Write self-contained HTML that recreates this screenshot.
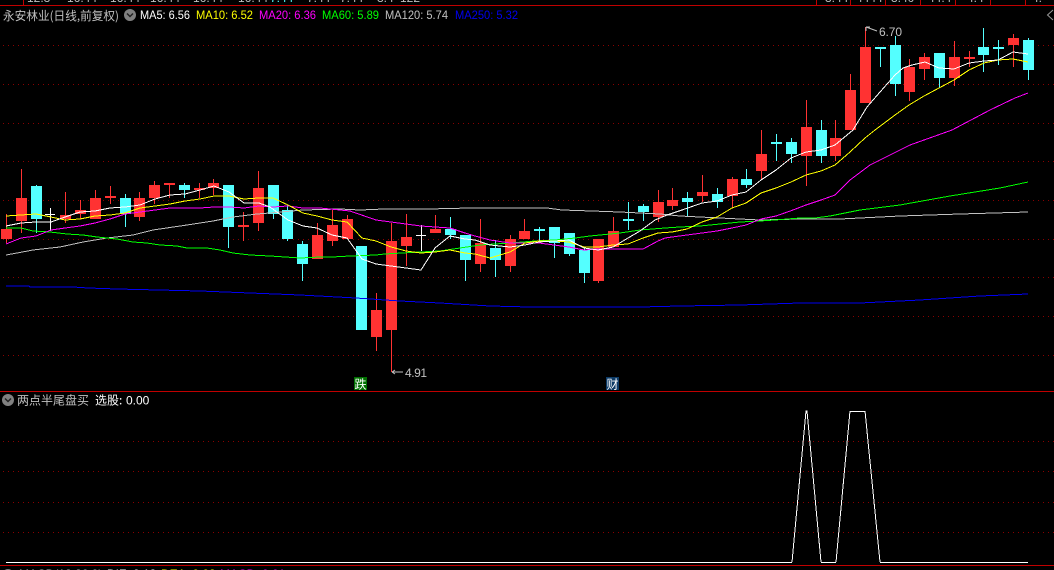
<!DOCTYPE html>
<html lang="zh">
<head>
<meta charset="utf-8">
<title>永安林业</title>
<style>
html,body{margin:0;padding:0;background:#000;width:1054px;height:570px;overflow:hidden}
svg{display:block}
text{font-family:"Liberation Sans","WenQuanYi Zen Hei","Noto Sans CJK SC",sans-serif;font-size:12px}
.cn{font-family:"WenQuanYi Zen Hei","Noto Sans CJK SC","Liberation Sans",sans-serif;font-size:12px}
.ma{shape-rendering:crispEdges;fill:none;stroke-width:1}
</style>
</head>
<body>
<svg width="1054" height="570" viewBox="0 0 1054 570" xmlns="http://www.w3.org/2000/svg">
<rect width="1054" height="570" fill="#000"/>

<!-- top strip -->
<g fill="#c0c0c0">
<text x="27" y="2">12.3</text><text x="67" y="2">16.44</text><text x="110" y="2">16.44</text><text x="150" y="2">16.44</text><text x="193" y="2">16.44</text><text x="238" y="2">16.44</text>
<text x="270" y="2" fill="#54ffff">7.44</text><text x="307" y="2">7.44</text><text x="340" y="2">7.44</text><text x="377" y="2">3.4</text><text x="400" y="2">122</text>
<text x="825" y="2">3.44</text><text x="856" y="2">4444</text><text x="891" y="2">3.40</text><text x="928" y="2">44.4</text><text x="967" y="2">4.4</text><text x="1032" y="2">4.</text>
</g>
<g shape-rendering="crispEdges" stroke="#c00000" fill="none">
<path d="M0 5.5H1054M23.5 0V5M816.5 0V5M850.5 0V5M885.5 0V5M920.5 0V5M955.5 0V5M990.5 0V5M1025.5 0V5"/>
<path d="M0 391.5H1054M0 565.5H1054"/>
</g>

<!-- dotted grid -->
<path shape-rendering="crispEdges" stroke="#8a0000" stroke-dasharray="1 4" fill="none"
 d="M3 45.5H1054M3 84.5H1054M3 123.5H1054M3 161.5H1054M3 200.5H1054M3 239.5H1054M3 277.5H1054M3 316.5H1054M3 355.5H1054M3 441.5H1054M3 471.5H1054M3 502.5H1054M3 532.5H1054"/>

<!-- chevron right -->
<path d="M1053 10L1047.5 15L1053 20" fill="none" stroke="#999" stroke-width="1"/>

<!-- wicks red -->
<path shape-rendering="crispEdges" stroke="#ff3232" fill="none" d="M6.5 214V243M21.5 169V233M65.5 192V223M80.5 200V219M95.5 190V219M110.5 186V204M139.5 192V221M154.5 181V204M169.5 183V198M199.5 183V198M213.5 179V195M243.5 212V241M258.5 171V231M317.5 223V259M332.5 210V246M347.5 215V239M376.5 293V351M391.5 223V372M406.5 214V266M435.5 215V233M480.5 219V272M510.5 235V272M524.5 219V239M598.5 239V283M613.5 217V247M658.5 190V222M672.5 188V210M702.5 175V202M732.5 177V208M761.5 130V179M806.5 100V186M835.5 120V161M850.5 74V130M865.5 27V103M909.5 59V101M924.5 53V80M954.5 41V86M969.5 51V67M1013.5 34V67"/>
<!-- bodies red -->
<path shape-rendering="crispEdges" fill="#ff3232" d="M1 229h11V239h-11zM16 198h11V221h-11zM60 215h11V219h-11zM75 210h11V214h-11zM90 198h11V219h-11zM105 196h11V198h-11zM134 198h11V217h-11zM149 185h11V198h-11zM164 183h11V185h-11zM194 188h11V190h-11zM208 183h11V188h-11zM238 225h11V227h-11zM253 188h11V223h-11zM312 235h11V259h-11zM327 225h11V241h-11zM342 219h11V239h-11zM371 310h11V337h-11zM386 241h11V330h-11zM401 237h11V246h-11zM430 229h11V233h-11zM475 243h11V264h-11zM505 239h11V266h-11zM519 231h11V239h-11zM593 239h11V281h-11zM608 231h11V247h-11zM653 202h11V217h-11zM667 200h11V206h-11zM697 192h11V196h-11zM727 179h11V196h-11zM756 154h11V171h-11zM801 127h11V156h-11zM830 138h11V156h-11zM845 90h11V130h-11zM860 47h11V103h-11zM904 67h11V92h-11zM919 57h11V69h-11zM949 57h11V78h-11zM964 57h11V59h-11zM1008 38h11V45h-11z"/>
<!-- wicks cyan -->
<path shape-rendering="crispEdges" stroke="#54ffff" fill="none" d="M36.5 185V233M125.5 194V227M184.5 183V198M228.5 185V248M273.5 185V219M287.5 205V241M302.5 241V281M450.5 217V239M465.5 235V281M495.5 240V277M539.5 227V243M554.5 227V258M569.5 233V256M584.5 248V283M628.5 202V230M643.5 204V221M687.5 192V216M717.5 188V208M746.5 169V188M776.5 134V161M791.5 138V163M821.5 120V163M880.5 47V67M895.5 36V96M939.5 53V88M983.5 28V72M998.5 40V65M1028.5 38V80"/>
<!-- bodies cyan -->
<path shape-rendering="crispEdges" fill="#54ffff" d="M31 186h11V219h-11zM120 198h11V214h-11zM179 185h11V190h-11zM223 185h11V227h-11zM268 185h11V214h-11zM282 210h11V239h-11zM297 244h11V264h-11zM356 246h11V330h-11zM445 229h11V235h-11zM460 235h11V260h-11zM490 248h11V260h-11zM534 229h11V231h-11zM549 227h11V243h-11zM564 233h11V254h-11zM579 250h11V273h-11zM623 219h11V221h-11zM638 206h11V212h-11zM682 198h11V202h-11zM712 194h11V202h-11zM741 179h11V185h-11zM771 142h11V144h-11zM786 142h11V154h-11zM816 130h11V156h-11zM875 47h11V49h-11zM890 45h11V84h-11zM934 53h11V78h-11zM978 47h11V55h-11zM993 47h11V49h-11zM1023 40h11V70h-11z"/>
<!-- white crosses -->
<path shape-rendering="crispEdges" stroke="#fff" fill="none" d="M50.5 208V231M45 214.5H55M421.5 225V251M416 235.5H426"/>

<!-- MA250 -->
<polyline class="ma" stroke="#0000f0" points="6,286 29,286 30,287 73,287 88,288 117,289 200,291 300,295 356,298 400,301 440,303 490,306 530,307 575,307 640,307 680,306 740,305 800,303 860,303 920,300 980,296 1028,294"/>
<!-- MA120 -->
<polyline class="ma" stroke="#c0c0c0" points="6,255 17,253 33,250 60,247 83,242 107,238 133,235 153,230 187,225 213,221 233,217 257,214 270,213 303,210 340,209 360,210 384,209 428,209 470,208 547,208 562,210 592,211 620,212 640,213 660,214 680,216 700,217 720,218 740,219 760,220 800,219 840,219 900,216 960,214 1028,212"/>
<!-- MA60 -->
<polyline class="ma" stroke="#00ff00" points="6,228 21,228 33,231 50,232 67,234 83,235 97,237 117,239 133,242 147,243 160,245 177,246 187,248 207,248 220,250 233,253 250,255 270,256 300,258 320,257 332,257 350,256 376,255 385,254 402,253 421,252 440,251 460,248 480,245 510,243 535,241 555,240 575,238 590,236 610,234 620,233 640,230 665,228 680,227 700,226 720,224 740,222 760,221 775,220 800,218 815,218 830,216 840,214 860,210 900,205 950,196 1000,188 1028,182"/>
<!-- MA20 -->
<polyline class="ma" stroke="#ff00ff" points="6,244 21,238 36,236 51,230 65,228 80,226 95,223 110,219 125,214 140,212 155,210 170,208 185,208 200,208 214,207 229,207 244,208 259,206 273,207 288,206 303,208 320,208 350,211 376,220 391,222 406,224 421,226 450,228 465,233 475,236 490,240 510,243 525,243 539,243 554,245 569,247 584,250 598,249 613,249 643,249 658,241 665,238 672,237 687,235 702,233 717,231 732,228 746,225 761,219 776,216 793,210 806,205 821,200 835,195 850,180 870,165 890,155 910,145 952,130 990,110 1015,98 1028,93"/>
<!-- MA10 -->
<polyline class="ma" stroke="#ffff00" points="6,216 21,215 36,214 51,217 65,220 80,219 95,216 110,215 125,213 140,208 155,206 170,204 185,201 200,199 214,196 229,196 244,199 259,198 273,198 288,205 303,213 317,216 332,220 347,222 362,238 376,241 391,247 406,251 421,253 435,252 450,250 465,253 475,254 490,258 510,252 525,243 539,241 554,241 569,242 584,247 598,247 613,245 628,244 643,238 658,233 672,232 687,229 702,222 717,217 732,208 746,203 761,193 776,188 791,182 806,175 821,171 835,165 850,152 865,138 875,130 895,115 909,105 924,96 939,88 954,80 969,70 984,63 998,60 1013,59 1028,62"/>
<!-- MA5 -->
<polyline class="ma" stroke="#ffffff" points="6,226 21,223 36,222 51,222 65,217 80,212 95,211 110,208 125,207 140,205 155,199 170,195 185,194 200,190 214,186 229,192 244,203 259,203 270,207 288,220 303,226 317,228 332,235 347,238 362,259 376,264 391,266 406,268 421,270 435,248 450,236 465,239 475,240 490,245 510,247 525,245 539,242 554,241 569,240 584,248 598,250 613,247 628,238 640,231 655,220 667,215 682,210 702,203 717,201 732,195 746,192 761,180 776,170 791,158 806,152 821,150 835,145 853,130 867,107 880,92 895,75 903,68 912,65 925,62 939,68 954,69 969,63 984,61 998,60 1013,52 1028,54"/>

<!-- header -->
<text class="cn" x="3" y="20" fill="#c0c0c0" textLength="116" lengthAdjust="spacingAndGlyphs">永安林业(日线,前复权)</text>
<circle cx="130" cy="15" r="6" fill="#808080"/>
<path d="M127 13.5L130 16.5L133 13.5" fill="none" stroke="#222" stroke-width="1.5"/>
<text x="140" y="19" fill="#ffffff" textLength="50" lengthAdjust="spacingAndGlyphs">MA5: 6.56</text>
<text x="196" y="19" fill="#ffff00" textLength="57" lengthAdjust="spacingAndGlyphs">MA10: 6.52</text>
<text x="259" y="19" fill="#ff00ff" textLength="57" lengthAdjust="spacingAndGlyphs">MA20: 6.36</text>
<text x="322" y="19" fill="#00ff00" textLength="57" lengthAdjust="spacingAndGlyphs">MA60: 5.89</text>
<text x="385" y="19" fill="#c0c0c0" textLength="63" lengthAdjust="spacingAndGlyphs">MA120: 5.74</text>
<text x="455" y="19" fill="#0000f0" textLength="63" lengthAdjust="spacingAndGlyphs">MA250: 5.32</text>

<!-- price labels -->
<path d="M866 27L877 31M866 27V31M866 27H870" fill="none" stroke="#c0c0c0"/>
<text x="879" y="36" fill="#c0c0c0" textLength="23">6.70</text>
<path d="M392 372H403M392 372L395 370M392 372L395 374" fill="none" stroke="#c0c0c0"/>
<text x="405" y="377" fill="#c0c0c0" textLength="22">4.91</text>

<!-- markers -->
<rect x="354" y="377" width="13" height="13" fill="#007000"/>
<text class="cn" x="354.5" y="388.5" fill="#fff">跌</text>
<rect x="606" y="377" width="13" height="13" fill="#0c3a66"/>
<text class="cn" x="606.5" y="388.5" fill="#fff">财</text>

<!-- lower pane header -->
<circle cx="8" cy="400" r="6" fill="#808080"/>
<path d="M5 398.5L8 401.5L11 398.5" fill="none" stroke="#222" stroke-width="1.5"/>
<text class="cn" x="17" y="404.5" fill="#c0c0c0">两点半尾盘买</text>
<text class="cn" x="95" y="404.5" fill="#ffffff">选股:</text>
<text x="126" y="404.5" fill="#ffffff">0.00</text>

<!-- signal -->
<path shape-rendering="crispEdges" stroke="#ffffff" fill="none" d="M6 562.5H792M821 562.5H836M880 562.5H1028M850 411.5H865"/>
<polyline class="ma" stroke="#ffffff" points="792,562 806,411 807,411 821,562"/>
<polyline class="ma" stroke="#ffffff" points="836,562 850,411"/>
<polyline class="ma" stroke="#ffffff" points="865,411 880,562"/>

<!-- bottom strip text -->
<circle cx="8" cy="575" r="6" fill="#808080"/>
<text x="19" y="578" fill="#c0c0c0">MACD(12,26,9)</text>
<text x="107" y="578" fill="#fff">DIF: 0.13</text>
<text x="161" y="578" fill="#ffff00">DEA: 0.08</text>
<text x="220" y="578" fill="#ff00ff">MACD: 0.01</text>
</svg>
</body>
</html>
